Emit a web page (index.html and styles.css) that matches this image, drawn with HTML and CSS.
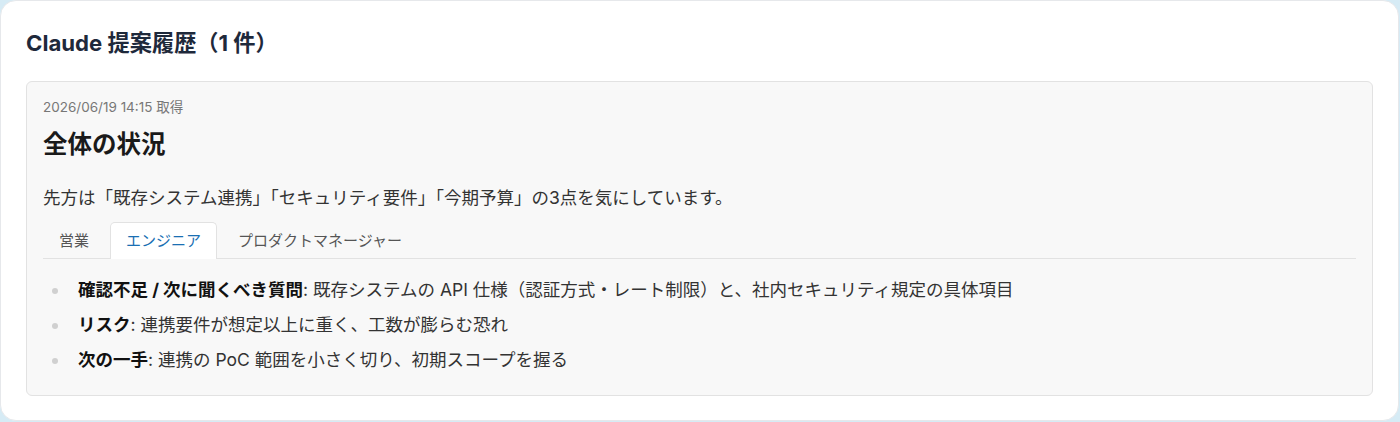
FILE: index.html
```html
<!DOCTYPE html>
<html lang="ja">
<head>
<meta charset="utf-8">
<title>Claude 提案履歴</title>
<link rel="stylesheet" href="styles.css">
</head>
<body>
<section class="card">
  <h2 class="card-title">Claude 提案履歴（1 件）</h2>
  <div class="proposal">
    <div class="meta">2026/06/19 14:15 取得</div>
    <h3 class="heading">全体の状況</h3>
    <p class="summary">先方は「既存システム連携」「セキュリティ要件」「今期予算」の3点を気にしています。</p>
    <nav class="tabs">
      <span class="tab">営業</span>
      <span class="tab active">エンジニア</span>
      <span class="tab">プロダクトマネージャー</span>
    </nav>
    <ul class="points">
      <li><strong>確認不足 / 次に聞くべき質問</strong>: 既存システムの API 仕様（認証方式・レート制限）と、社内セキュリティ規定の具体項目</li>
      <li><strong>リスク</strong>: 連携要件が想定以上に重く、工数が膨らむ恐れ</li>
      <li><strong>次の一手</strong>: 連携の PoC 範囲を小さく切り、初期スコープを握る</li>
    </ul>
  </div>
</section>
</body>
</html>
```
FILE: styles.css
```css
* { box-sizing: border-box; }
html, body { margin: 0; padding: 0; }
body {
  background: #d6ebf5;
  font-family: "Inter", "Noto Sans CJK JP", sans-serif;
  color: #333;
}
.card {
  width: 1399px;
  height: 421px;
  background: #fff;
  border: 1px solid #e6e8eb;
  border-radius: 16px;
  padding: 29px 25px 0 25px;
}
.card-title {
  margin: 0 0 25px 0;
  font-size: 22.2px;
  line-height: 26px;
  font-weight: 700;
  color: #1e293b;
}
.proposal {
  background: #f8f8f8;
  border: 1px solid #e2e2e2;
  border-radius: 6px;
  padding: 15px 16px 14px 16px;
}
.meta {
  font-size: 13.5px;
  line-height: 20px;
  color: #777;
}
.heading {
  margin: 11px 0 0 0;
  font-size: 24.5px;
  line-height: 32px;
  font-weight: 700;
  color: #1a1a1a;
}
.summary {
  margin: 24px 0 0 0;
  font-size: 17.5px;
  line-height: 27px;
  color: #333;
}
.tabs {
  display: flex;
  gap: 5px;
  margin-top: 11px;
  border-bottom: 1px solid #e2e2e2;
}
.tab {
  display: block;
  padding: 0 15px;
  height: 36px;
  line-height: 36px;
  font-size: 15px;
  color: #555;
  border: 1px solid transparent;
  border-bottom: none;
  border-radius: 5px 5px 0 0;
  margin-bottom: -1px;
}
.tab.active {
  background: #fff;
  border-color: #e2e2e2;
  color: #1a6fb3;
  height: 37px;
}
.points {
  list-style: none;
  margin: 17px 0 8px 0;
  padding-left: 35px;
  font-size: 17.5px;
  line-height: 27px;
  color: #333;
}
.points li { margin-bottom: 8px; }
.points li:last-child { margin-bottom: 0; }
.points li::before {
  content: "";
  display: inline-block;
  width: 6px;
  height: 6px;
  border-radius: 50%;
  background: #d0d0d0;
  margin: 0 20px 0 -26px;
  vertical-align: middle;
}
.points strong { color: #111; font-weight: 700; }
```
